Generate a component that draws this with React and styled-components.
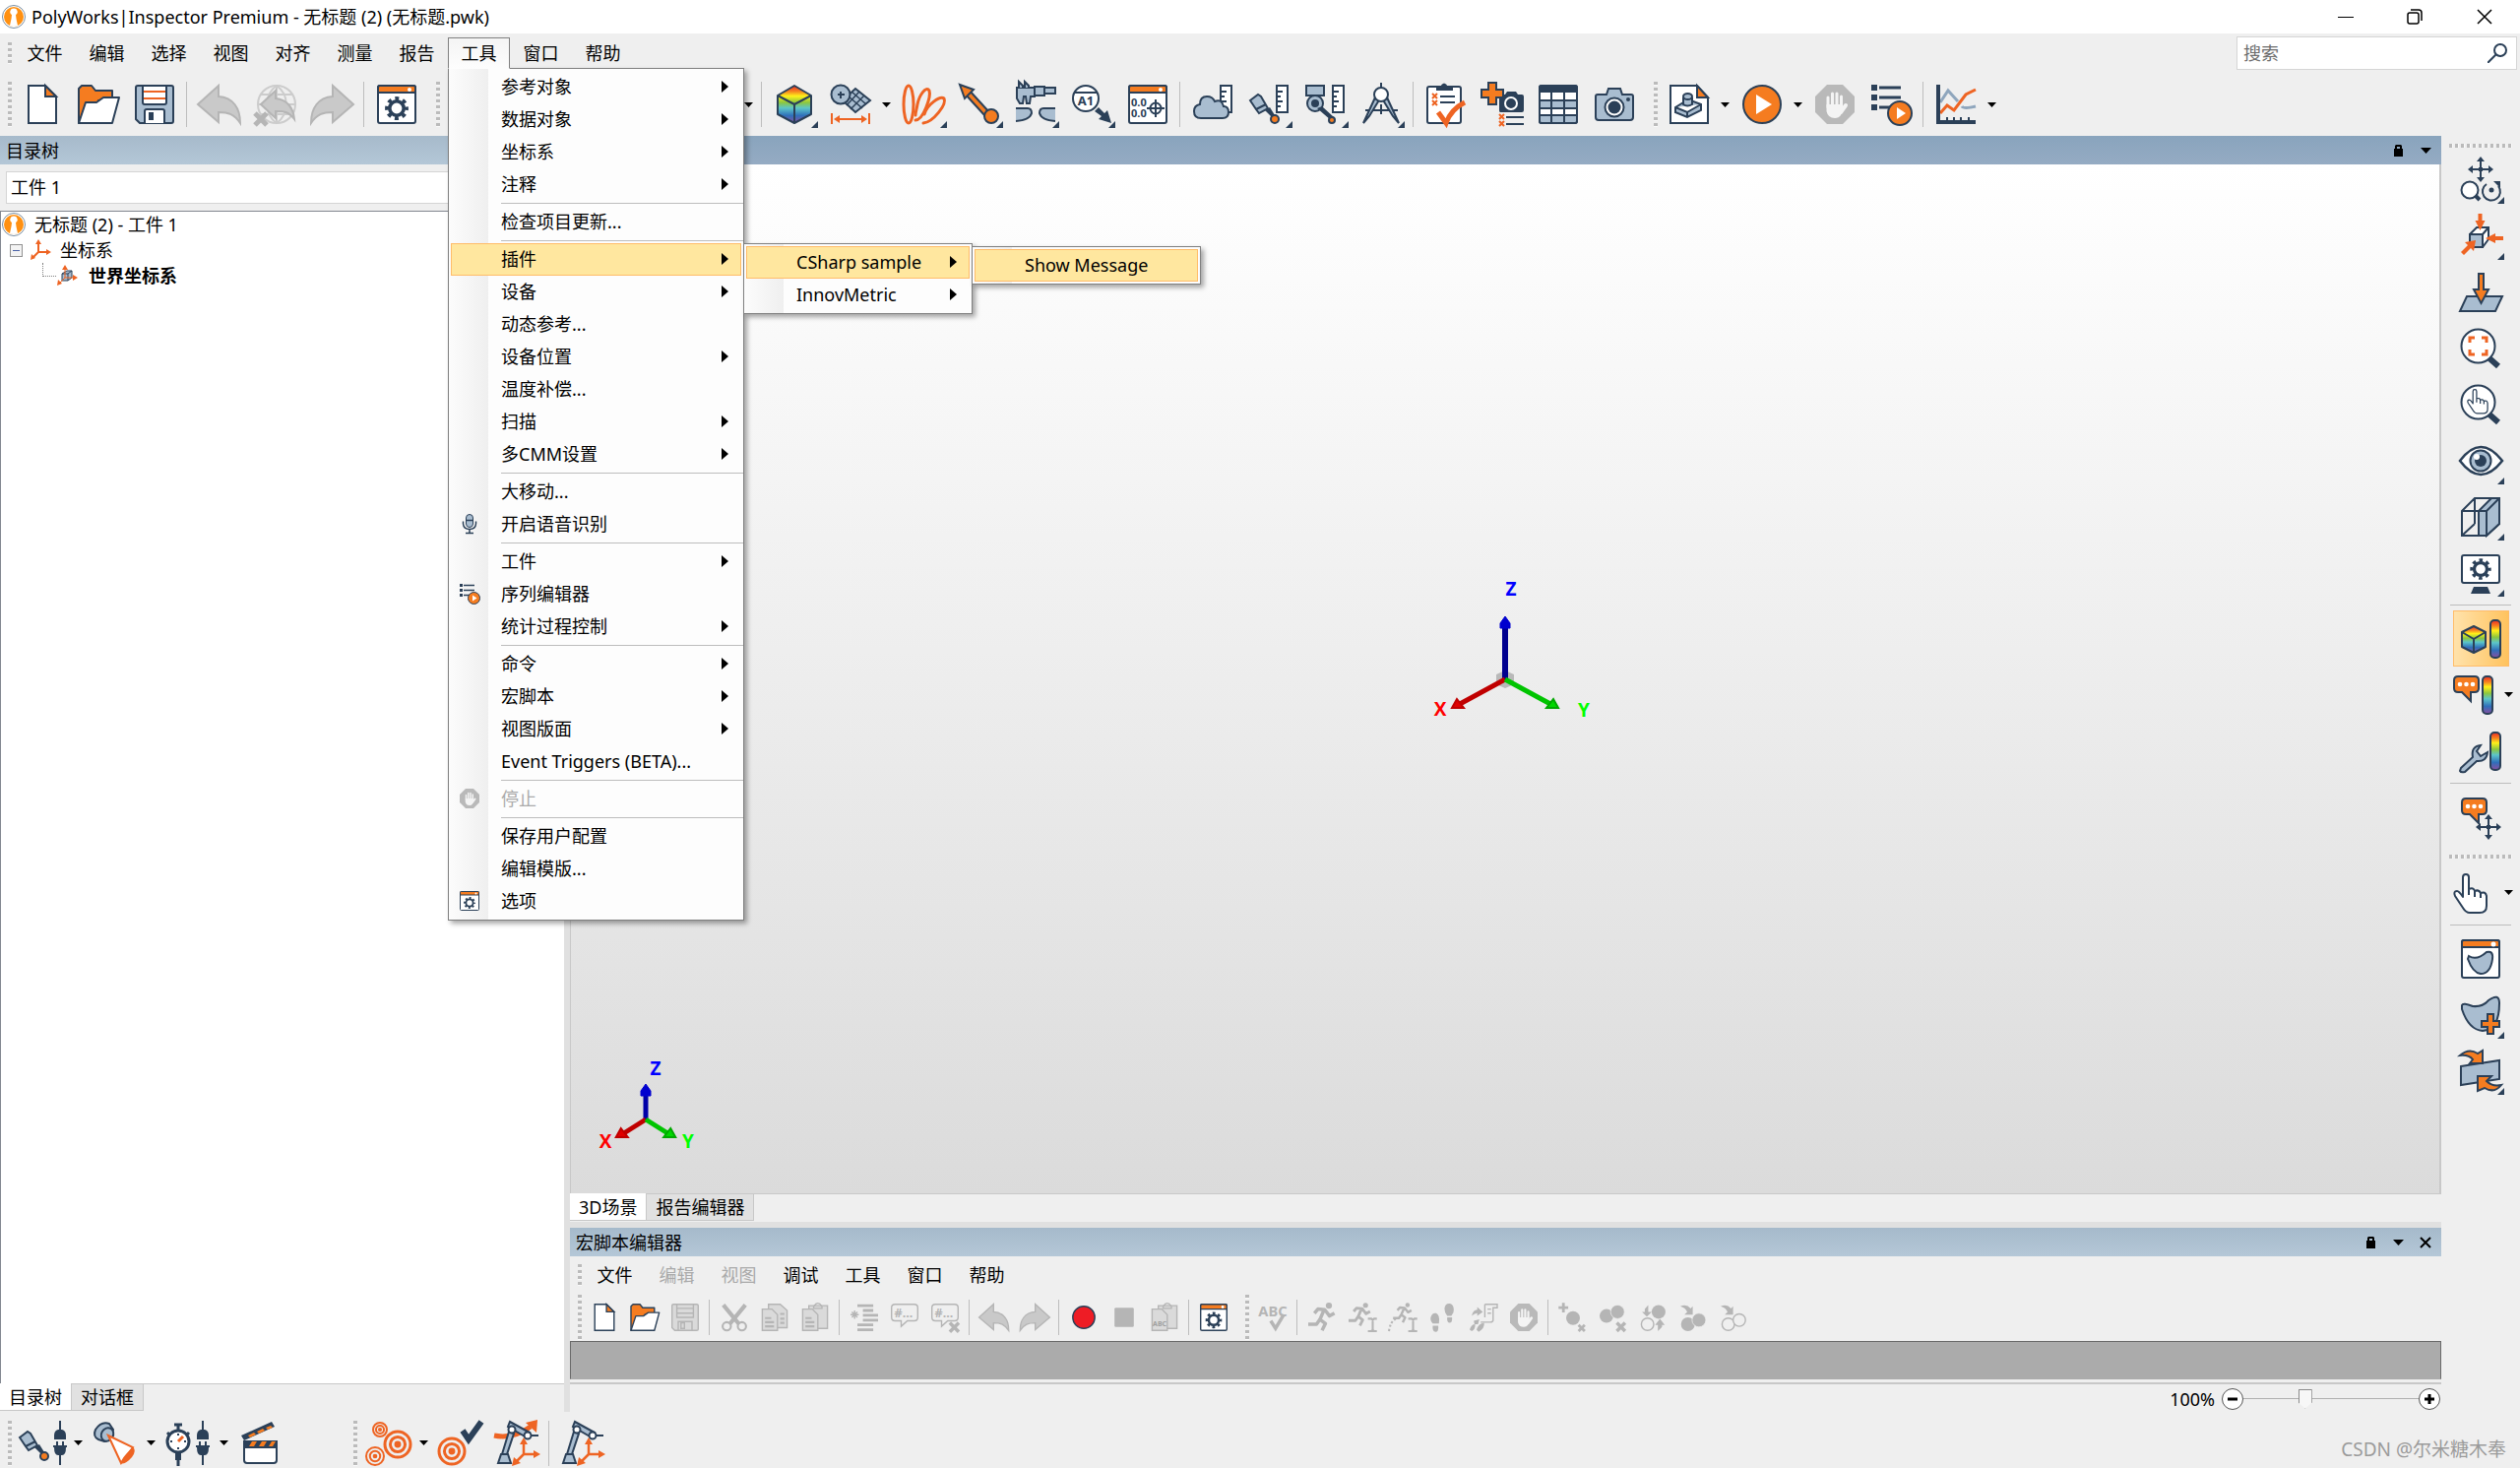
import React, { useState } from "react";
import styled, { createGlobalStyle, css } from "styled-components";

const NAVY = "#2b4058";
const STEEL = "#a9bdd0";
const ORANGE = "#f57c20";
const FLAME = "#ee6423";
const GREY = "#b5b5b5";
const PALE = "#dadada";

const line = { fill: "none", stroke: NAVY, strokeWidth: 2 };
const white = { fill: "#fff", stroke: NAVY, strokeWidth: 2 };
const steel = { fill: STEEL, stroke: NAVY, strokeWidth: 2 };
const orange = { fill: ORANGE, stroke: NAVY, strokeWidth: 2 };
const flame = { fill: "none", stroke: FLAME, strokeWidth: 2 };
const grey = { fill: "none", stroke: GREY, strokeWidth: 2 };
const pale = { fill: PALE, stroke: GREY, strokeWidth: 2 };

const GlobalStyle = createGlobalStyle`
  * {
    box-sizing: border-box;
  }
  body {
    margin: 0;
    background: #efefef;
    color: #000;
    font-family: "Noto Sans", "Noto Sans CJK SC", sans-serif;
    font-size: 18px;
    line-height: 24px;
  }
  button,
  input,
  select {
    font: inherit;
    color: inherit;
  }
`;

/* ---------- icon parts ---------- */

const Gear = ({ cx, cy, r, color = NAVY }) => (
  <g fill="none" stroke={color}>
    <circle cx={cx} cy={cy} r={r * 0.72} strokeWidth={r * 0.36} />
    <circle
      cx={cx}
      cy={cy}
      r={r}
      strokeWidth={r * 0.38}
      strokeDasharray={`${(r * Math.PI) / 8} ${(r * Math.PI) / 8}`}
      strokeDashoffset={(r * Math.PI) / 16}
    />
  </g>
);

const Target = ({ cx, cy, r }) => (
  <g fill="none" stroke={FLAME} strokeWidth={r > 9 ? 3 : 2}>
    <circle cx={cx} cy={cy} r={r} />
    <circle cx={cx} cy={cy} r={r * 0.58} />
    <circle cx={cx} cy={cy} r={r * 0.15} fill={FLAME} />
  </g>
);

const MoveArrows = ({ x, y }) => (
  <g transform={`translate(${x} ${y})`}>
    <path d="M-9 0H9M0-9V9" {...line} />
    <path
      d="M-13 0l5-4v8zM13 0l-5-4v8zM0-13l-4 5h8zM0 13l-4-5h8zM-2-2h4v4h-4z"
      fill={NAVY}
    />
  </g>
);

const Bubble = () => (
  <g>
    <path
      d="M5 1H22Q26 1 26 5V13Q26 17 22 17H18V26L9 17H5Q1 17 1 13V5Q1 1 5 1Z"
      {...orange}
    />
    <g fill="#fff">
      <circle cx="7" cy="9" r="2.3" />
      <circle cx="13.500" cy="9" r="2.3" />
      <circle cx="20" cy="9" r="2.3" />
    </g>
  </g>
);

const RainbowBar = ({ x }) => (
  <rect
    x={x}
    y="1"
    width="10"
    height="38"
    rx="4"
    fill="url(#rainbow)"
    stroke={NAVY}
    strokeWidth="2"
  />
);

const Ruler = () => (
  <path d="M28 1H39V28H28ZM28 7h6M28 12h4M28 17h6M28 22h4" {...white} />
);

const Plug = () => (
  <g>
    <path d="M40-3V8M40 29V42" {...line} />
    <path
      d="M34 16V12Q34 7 38 6H42Q46 7 46 12V16ZM33 22H36V18H38V22H42V18H44V22H47V24H46Q46 32 42 32H38Q34 32 34 24H33Z"
      fill={NAVY}
    />
  </g>
);

const ArmAxes = () => (
  <g transform="translate(-2 0)">
    <path d="M3 40L6 31H13L16 40ZM7 31L14 8L19 10L12 31Z" {...steel} />
    <path d="M15-2L35 9L32 14L13 3Z" {...steel} />
    <circle cx="17" cy="6" r="3.500" {...white} />
    <circle cx="33" cy="12" r="3.500" {...white} />
    <path d="M37 12H44" {...line} />
    <path d="M29 18V31H42M29 31L21 39" {...flame} strokeWidth="2.5" />
    <path d="M29 14l-4 7h8zM46 31l-7-4v8zM17 43l2-9 7 6z" fill={FLAME} />
  </g>
);

const Runner = () => (
  <g fill="none" stroke={GREY} strokeWidth="5">
    <circle cx="30" cy="3" r="4.500" fill={GREY} stroke="none" />
    <path
      d="M9 14L14 8L24 9L31 18L38 14M23 9L17 23L25 29L20 39M17 23L12 30H0"
      strokeLinejoin="round"
    />
  </g>
);

const TextCursor = () => (
  <path d="M28 22H33L35 24L37 22H41M28 40H33L35 38L37 40H41M35 23V39" {...grey} strokeWidth="3" />
);

const Hand = () => (
  <path
    d="M13 1Q16 1 16 4V16Q21 14 22 18Q26 16 28 20Q33 18 34 23V33Q34 40 27 40H17Q13 40 10 35L2 23Q0 18 4 18Q6 18 10 24V4Q10 1 13 1ZM16 16V22M22 18V24M28 20V25"
    strokeLinejoin="round"
    {...white}
  />
);

const StopHand = () => (
  <g>
    <path d="M12 0H28L40 12V28L28 40H12L0 28V12Z" fill="#b9b9b9" />
    <g stroke="#f4f4f4" strokeLinecap="round" fill="none">
      <path d="M13 23V13M17.500 20V9M22 20V9M26.500 21V12" strokeWidth="3" />
      <path d="M31 21L26 28" strokeWidth="4" />
    </g>
    <path d="M11.500 20H28V25L26 31Q24 34 20 34Q13 34 11.500 27Z" fill="#f4f4f4" />
  </g>
);

const Probe = () => (
  <g>
    <path d="M1 16L9 10L12 12L19 24L10 29L7 25Z" {...steel} />
    <path d="M7 25L17 20" {...line} />
    <path d="M16 26l5-3 5 8-3 2z" fill={NAVY} />
    <circle cx="26" cy="35" r="4" {...orange} />
  </g>
);

const icons = {
  newFile: (
    <g>
      <path d="M6 1H23L34 12V39H6Z" {...white} />
      <path d="M23 1V12H34Z" {...orange} />
    </g>
  ),
  open: (
    <g strokeLinejoin="round">
      <path d="M0 39V4L3 1H13L17 6H34V16H20V39Z" {...orange} />
      <path d="M0 39L7 18H18L25 13H41L34 39Z" {...white} />
    </g>
  ),
  save: (
    <g>
      <path d="M3 1H37Q39 1 39 3V37Q39 39 37 39H5L1 35V3Q1 1 3 1Z" {...steel} />
      <path d="M8 1H32V18Q32 20 30 20H10Q8 20 8 18Z" {...white} />
      <path d="M9 7H31M9 14H31" {...flame} />
      <path d="M10 39V27Q10 25 12 25H28Q30 25 30 27V39" {...white} />
      <path d="M14 28H19V36H14Z" fill={NAVY} />
    </g>
  ),
  saveOff: (
    <g>
      <path d="M3 1H37Q39 1 39 3V37Q39 39 37 39H5L1 35V3Q1 1 3 1Z" {...pale} />
      <path d="M8 1V20H32V1M9 7H31M9 14H31M10 39V26H30V39M14 28H19V36H14Z" {...grey} />
    </g>
  ),
  undo: <path d="M-2 20L19 1V12C34 13 41 24 41 39C35 30 29 28 19 28V38Z" {...pale} fill="#c9c9c9" />,
  redo: <path d="M42 20L21 1V12C6 13-1 24-1 39C5 30 11 28 21 28V38Z" {...pale} fill="#c9c9c9" />,
  undoWeb: (
    <g>
      <circle cx="21" cy="20" r="19" fill="none" stroke="#ccc" strokeWidth="2" />
      <path
        d="M21 1V39M2 20H40M5 10H37M5 30H37M21 1C8 10 8 30 21 39C34 30 34 10 21 1"
        fill="none"
        stroke="#ccc"
        strokeWidth="2"
      />
      <path d="M5 20L20 6V14C32 15 38 24 39 35C33 27 28 27 20 27V34Z" {...pale} fill="#c9c9c9" />
      <path d="M-1 29L11 41M11 29L-1 41" {...grey} strokeWidth="5" />
    </g>
  ),
  settings: (
    <g>
      <rect x="1" y="1" width="38" height="38" rx="2" {...white} />
      <path d="M1 8V3Q1 1 3 1H37Q39 1 39 3V8Z" {...orange} />
      <circle cx="33" cy="5" r="2" fill="#fff" />
      <Gear cx={20} cy={24} r={10} />
    </g>
  ),
  rainbowCube: (
    <g strokeLinejoin="round">
      <path d="M20 1L37 11V30L20 39L3 30V11Z" fill="url(#rainbow)" stroke={NAVY} strokeWidth="2" />
      <path d="M3 11L20 20L37 11M20 20V39" {...line} />
    </g>
  ),
  measure: (
    <g>
      <path d="M25 4L40 16L25 28L12 16Z" {...steel} />
      <path d="M21 7L36 20M17 11L32 24M29 7L16 21M34 11L20 25" {...line} strokeWidth="1.500" />
      <circle cx="10" cy="10" r="9.500" {...steel} />
      <path d="M10 7V14M7 10H14" {...line} />
      <path d="M1 29V40M39 29V40M5 35H35" {...flame} />
      <path d="M3 35l6-4v8zM37 35l-6-4v8z" fill={FLAME} />
    </g>
  ),
  curves: (
    <g {...flame} strokeWidth="3" strokeLinecap="round">
      <ellipse cx="5" cy="20" rx="5" ry="19" />
      <path d="M12 36C20 36 28 12 26 6C23 1 16 10 14 20C13 26 12 28 12 31" />
      <path d="M20 39C30 38 44 20 41 14C37 11 24 20 21 30" />
    </g>
  ),
  vector: (
    <g>
      <path d="M5 9L9 5L30 28L26 32Z" {...orange} />
      <path d="M0 0L14 5L5 14Z" {...orange} />
      <circle cx="32" cy="32" r="7" {...orange} />
    </g>
  ),
  caliper: (
    <g>
      <path d="M1 3H40V9H19V12H15L14 19H11L10 12H8L7 19H4L1 14Z" {...steel} />
      <path d="M3 3V-3L7 1V3M9 3V-3L13 1V3" {...steel} />
      <rect x="19" y="2" width="10" height="9" {...steel} />
      <path d="M0 24H12Q16 24 16 29Q14 36 0 37" {...steel} />
      <path d="M40 24H28Q24 24 24 29Q26 36 40 37" {...steel} />
    </g>
  ),
  datum: (
    <g>
      <circle cx="14" cy="14" r="13" {...white} />
      <path d="M3 8H25" {...line} />
      <text x="14" y="21" textAnchor="middle" fontSize="13" fontWeight="700" fill={NAVY}>
        A1
      </text>
      <path d="M23 27l4-4 6 6 3-3 4 13-13-4 3-3z" fill={NAVY} />
    </g>
  ),
  readout: (
    <g>
      <rect x="1" y="1" width="38" height="38" rx="2" {...white} />
      <path d="M1 8V3Q1 1 3 1H37Q39 1 39 3V8Z" {...orange} />
      <circle cx="33" cy="5" r="2" fill="#fff" />
      <g fontSize="11" fontWeight="700" fill={NAVY}>
        <text x="3" y="22">0.0</text>
        <text x="3" y="33">0.0</text>
      </g>
      <circle cx="28" cy="24" r="5.500" {...line} />
      <path d="M28 15V33M19 24H37" {...line} />
    </g>
  ),
  cloud: (
    <g>
      <Ruler />
      <path d="M8 34Q1 34 1 27Q1 21 7 20Q7 12 14 12Q20 12 22 17Q29 14 31 22Q36 22 36 28Q36 34 30 34Z" {...steel} />
    </g>
  ),
  probe: (
    <g>
      <Ruler />
      <Probe />
    </g>
  ),
  scanner: (
    <g>
      <Ruler />
      <path d="M1 1H19V11H1Z" {...steel} />
      <circle cx="10" cy="19" r="8" {...steel} />
      <circle cx="10" cy="19" r="4" fill={NAVY} />
      <path d="M12 24L17 22L29 33L26 36Z" fill={NAVY} />
      <circle cx="27" cy="36" r="3" {...orange} />
    </g>
  ),
  compass: (
    <g>
      <path d="M20-2V4M4 26H37" {...line} />
      <path d="M14 13L2 39L8 32L19 14ZM26 13L38 39L32 32L21 14Z" {...steel} />
      <circle cx="20" cy="10" r="7" {...white} />
      <path d="M20 20V30" {...line} />
    </g>
  ),
  checklist: (
    <g>
      <rect x="1" y="2" width="34" height="37" rx="2" {...white} />
      <path d="M10 2H14Q18-5 22 2H27V6H10Z" fill={NAVY} />
      <path d="M14 12H29M14 18H29" {...line} />
      <path d="M6 9l5 5m0-5l-5 5M6 16l5 5m0-5l-5 5" {...flame} />
      <path d="M12 28L20 39Q25 25 39 18" {...flame} strokeWidth="5" />
    </g>
  ),
  addSnapshot: (
    <g>
      <path d="M17 10H23L25 7H34L36 10H40Q42 10 42 12V26Q42 28 40 28H18Q17 28 17 26Z" fill={NAVY} />
      <circle cx="29" cy="19" r="6" fill={NAVY} stroke="#fff" strokeWidth="2" />
      <path d="M6-2H14V5H21V13H14V20H6V13H-1V5H6Z" {...orange} />
      <path d="M24 33H42M24 40H42" {...line} />
      <path d="M17 30l5 5m0-5l-5 5M17 37l5 5m0-5l-5 5" {...flame} />
    </g>
  ),
  table: (
    <g>
      <rect x="1" y="1" width="38" height="38" rx="2" {...white} />
      <path d="M1 16H39V24H1ZM1 31H39V39H1Z" fill={STEEL} />
      <path d="M1 16H39M1 24H39M1 31H39M13 8V39M26 8V39" {...line} />
      <rect x="1" y="1" width="38" height="38" rx="2" {...line} />
      <path d="M1 1H39V8H1Z" fill={NAVY} />
    </g>
  ),
  camera: (
    <g>
      <path d="M3 10H12L14 4H26L28 10H37Q39 10 39 12V33Q39 36 36 36H4Q1 36 1 33V12Q1 10 3 10Z" {...steel} />
      <circle cx="20" cy="23" r="9.500" {...white} />
      <circle cx="20" cy="23" r="6.500" fill={NAVY} />
      <circle cx="34" cy="15" r="2" fill={NAVY} />
    </g>
  ),
  partDoc: (
    <g>
      <path d="M1 1H28L39 13V39H1Z" {...white} />
      <path d="M28 1V13H39Z" {...orange} />
      <path d="M6 23L19 15L32 20V26L18 33L6 28ZM6 23L18 28L32 20M18 28V33" {...steel} />
      <path d="M14 13V20Q18 23 23 20V13" {...steel} />
      <ellipse cx="18.500" cy="12" rx="4.500" ry="3" {...steel} />
    </g>
  ),
  play: (
    <g>
      <circle cx="20" cy="20" r="19" {...orange} />
      <path d="M14 10V30L30 20Z" fill="#fff" />
    </g>
  ),
  stopHand: <StopHand />,
  sequence: (
    <g>
      <path d="M0 0H6V6H0ZM0 10H6V16H0ZM0 20H6V26H0Z" fill={NAVY} />
      <path d="M8 3H30M8 13H30M8 23H22" {...line} strokeWidth="3" />
      <circle cx="29" cy="29" r="12" {...orange} />
      <path d="M26 23V35L35 29Z" fill="#fff" />
    </g>
  ),
  chart: (
    <g>
      <path d="M4 18L12 6L22 17M26 22Q28 25 40 22" fill="none" stroke="#8fa6bd" strokeWidth="3" />
      <path d="M4 29L11 21L18 26L30 10L40 5" {...flame} strokeWidth="3" />
      <path d="M2 0V38H40" {...line} strokeWidth="4" />
      <path d="M11 33V37M18 33V37M25 33V37M33 33V37" {...line} />
    </g>
  ),
  navigate: (
    <g>
      <MoveArrows x={20} y={9} />
      <path d="M13 34L19 40" {...line} strokeWidth="4" />
      <circle cx="9" cy="30" r="8.500" {...white} />
      <path d="M26 24A9 9 0 1 0 38 26" {...line} />
      <path d="M33 21h7v7z" fill={NAVY} />
      <circle cx="31" cy="30" r="2.500" fill={NAVY} />
    </g>
  ),
  standardView: (
    <g>
      <path d="M9 18L16 11H28V23L22 31H9Z" {...white} />
      <path d="M9 18H22V31H9Z" {...steel} />
      <path d="M22 18L28 11" {...line} />
      <path d="M17.500-3h4v7h3l-5 10-5-10h3zM43 20v4h-8v3l-10-5 10-5v3zM0 36l7-7-3-3 11-2-2 11-3-3-7 7z" fill={FLAME} />
    </g>
  ),
  alignPlane: (
    <g>
      <path d="M6 24H42L35 39H-1Z" {...steel} />
      <path d="M18 1H23V17H28L20.500 31L13 17H18Z" {...orange} />
    </g>
  ),
  zoomFit: (
    <g>
      <path d="M29 30L38 38" {...line} strokeWidth="6" />
      <circle cx="17.500" cy="17.500" r="17" {...white} />
      <path d="M9 14V9H14M21 9H26V14M26 21V26H21M14 26H9V21" {...flame} strokeWidth="3" />
    </g>
  ),
  zoomHand: (
    <g>
      <path d="M29 30L38 38" {...line} strokeWidth="6" />
      <circle cx="17.500" cy="17.500" r="17" {...white} />
      <g transform="translate(6 4) scale(.62)">
        <Hand />
      </g>
    </g>
  ),
  eye: (
    <g>
      <path d="M-1 20Q20-8 42 20Q20 48-1 20Z" {...white} strokeWidth="2.500" />
      <circle cx="20" cy="20" r="10.500" {...steel} />
      <circle cx="20" cy="20" r="6" fill={NAVY} />
      <circle cx="16" cy="16" r="3" fill="#fff" />
    </g>
  ),
  section: (
    <g>
      <path d="M1 14L14 1H39V27L26 39H1ZM14 1V27M14 27L1 39" {...line} />
      <path d="M18 14H26V39H18ZM18 14L31 1H39V27L26 39V14Z" {...steel} />
      <path d="M26 14L39 1M1 14H26" {...line} />
    </g>
  ),
  display: (
    <g>
      <rect x="1" y="2" width="38" height="28" rx="2" {...white} />
      <Gear cx={20} cy={16} r={9} />
      <path d="M13 34H27L30 41H10Z" fill={NAVY} />
    </g>
  ),
  cubeScale: (
    <g strokeLinejoin="round">
      <path d="M13 7L25 13V28L13 34L1 28V13Z" fill="url(#rainbow)" stroke={NAVY} strokeWidth="2" />
      <path d="M1 13L13 20L25 13M13 20V34" {...line} />
      <RainbowBar x={30} />
    </g>
  ),
  bubbleScale: (
    <g>
      <Bubble />
      <RainbowBar x={30} />
    </g>
  ),
  wrenchScale: (
    <g>
      <path
        d="M0 37L12 26Q10 15 20 14L16 20L20 25L27 21Q26 31 16 30L4 41Q0 42-1 40Z"
        {...steel}
      />
      <RainbowBar x={30} />
    </g>
  ),
  bubbleMove: (
    <g>
      <Bubble />
      <MoveArrows x={28} y={30} />
    </g>
  ),
  hand: <Hand />,
  surfaceWindow: (
    <g>
      <rect x="1" y="1" width="38" height="38" rx="2" {...white} />
      <path d="M1 8V3Q1 1 3 1H37Q39 1 39 3V8Z" {...orange} />
      <circle cx="33" cy="5" r="2.500" fill="#fff" />
      <path d="M8 17Q16 22 26 13Q33 11 32 20Q30 35 20 35Q12 34 7 20Z" {...steel} />
    </g>
  ),
  surfaceAdd: (
    <g>
      <path d="M1 10Q2 7 12 11Q22 12 28 5Q39-3 39 8Q39 35 22 36Q8 35 1 14Z" {...steel} />
      <path d="M27 19H33V26H39V32H33V39H27V32H21V26H27Z" {...orange} />
    </g>
  ),
  surfaceSwap: (
    <g>
      <path d="M0 15L39 9V28L0 34Z" {...steel} />
      <path d="M-1 4Q8-4 17 2L22-1V12H9L12 8Q8 3-1 4Z" {...orange} />
      <path d="M41 34Q34 43 24 37L17 40V25H31L26 30Q32 36 41 34Z" {...orange} />
    </g>
  ),
  record: <circle cx="20" cy="20" r="16" fill="#ee1c25" stroke={NAVY} strokeWidth="2" />,
  stop: <rect x="6" y="6" width="28" height="28" rx="2" fill={GREY} />,
  cut: (
    <g {...grey} strokeWidth="3">
      <path d="M4 2L27 30M36 2L13 30" strokeWidth="6" />
      <circle cx="9" cy="33" r="6" />
      <circle cx="31" cy="33" r="6" />
    </g>
  ),
  copy: (
    <g>
      <path d="M11 1H28L38 10V35H11Z" {...pale} />
      <path d="M2 8H16L24 16V39H2Z" {...pale} />
      <path d="M6 21H15M6 27H19M6 33H19M28 15H34M28 22H34M28 28H34" {...grey} strokeWidth="3" />
    </g>
  ),
  paste: (
    <g>
      <path d="M11 3H38V36H11Z" {...pale} />
      <path d="M18 4Q24-5 30 4V7H18Z" {...grey} />
      <path d="M2 8H16L24 16V39H2Z" {...pale} />
      <path d="M6 21H15M6 27H19M6 33H19" {...grey} strokeWidth="3" />
    </g>
  ),
  pasteText: (
    <g>
      <path d="M11 3H38V36H11Z" {...pale} />
      <path d="M18 4Q24-5 30 4V7H18Z" {...grey} />
      <path d="M2 8H16L24 16V39H2Z" {...pale} />
      <text x="3" y="33" fontSize="10" fontWeight="700" fill="#9f9f9f">ABC</text>
    </g>
  ),
  indent: (
    <g>
      <path d="M10 3H33M18 10H33M18 17H40M18 24H40M10 31H33M10 38H33" {...grey} strokeWidth="4" />
      <path d="M6 10V22M0 16H12M2 12L10 20M10 12L2 20" {...grey} />
    </g>
  ),
  comment: (
    <g>
      <path d="M6 1H34Q39 1 39 6V20Q39 25 34 25H24L15 33V25H6Q1 25 1 20V6Q1 1 6 1Z" {...grey} />
      <text x="5" y="20" fontSize="18" fontWeight="700" fill={GREY}>#...</text>
    </g>
  ),
  uncomment: (
    <g>
      <path d="M6 1H34Q39 1 39 6V20Q39 25 34 25H24L15 33V25H6Q1 25 1 20V6Q1 1 6 1Z" {...grey} />
      <text x="5" y="20" fontSize="18" fontWeight="700" fill={GREY}>#...</text>
      <path d="M27 28L40 41M40 28L27 41" {...grey} strokeWidth="5" />
    </g>
  ),
  spelling: (
    <g>
      <text x="-1" y="18" fontSize="21" fontWeight="700" fill={GREY}>ABC</text>
      <path d="M17 25L24 36L36 16" {...grey} strokeWidth="5" />
    </g>
  ),
  run: <Runner />,
  runToCursor: (
    <g>
      <g transform="scale(.82)">
        <Runner />
      </g>
      <TextCursor />
    </g>
  ),
  skipToCursor: (
    <g>
      <g transform="translate(6 0) scale(.7)">
        <Runner />
      </g>
      <path d="M0 40Q2 26 10 22" {...grey} strokeWidth="3" strokeDasharray="3 3" />
      <TextCursor />
    </g>
  ),
  steps: (
    <g fill={GREY}>
      <path d="M2 20Q4 13 10 14Q16 17 14 29H5Q1 25 2 20ZM5 32H13Q14 41 9 41Q4 40 5 32ZM22 7Q23-1 30 0Q37 2 35 13L32 18H26Q22 13 22 7ZM26 20L33 20Q34 28 29 28Q25 27 26 20Z" />
    </g>
  ),
  stepInto: (
    <g>
      <path d="M22 1H40V6H34V24Q34 27 30 27H16M22 1V20M26 8H31M26 14H31" {...grey} />
      <path d="M3 18Q5 9 11 9V5L19 12L11 18V14Q7 14 3 18ZM0 38Q2 30 8 30Q8 38 3 40ZM10 38Q13 29 21 28Q22 36 13 41ZM6 25L14 23L12 30H7Z" fill={GREY} />
    </g>
  ),
  addBreak: (
    <g>
      <path d="M6-1V13M-1 6H13M28 31L37 40M37 31L28 40" {...grey} strokeWidth="4" />
      <circle cx="20" cy="21" r="10" fill={GREY} />
    </g>
  ),
  clearBreaks: (
    <g>
      <circle cx="10" cy="18" r="10" fill={GREY} />
      <circle cx="26" cy="12" r="10" fill={GREY} stroke="#efefef" />
      <path d="M25 28L37 40M37 28L25 40" {...grey} strokeWidth="5" />
    </g>
  ),
  swapBreaks: (
    <g>
      <circle cx="27" cy="12" r="10" fill={GREY} />
      <circle cx="11" cy="30" r="9" {...grey} />
      <path d="M12 2L7 8V12H3L10 19L17 12H12ZM26 40L32 34V31H36L29 22L22 31H26Z" fill={GREY} />
    </g>
  ),
  enableBreaks: (
    <g>
      <circle cx="11" cy="30" r="10" fill={GREY} />
      <circle cx="27" cy="24" r="10" fill={GREY} stroke="#efefef" />
      <path d="M0 4Q9 0 15 7L18 4V16H6L10 12Q7 6 0 4Z" fill={GREY} />
    </g>
  ),
  disableBreaks: (
    <g>
      <circle cx="11" cy="30" r="9" {...grey} />
      <circle cx="27" cy="24" r="9" fill="#efefef" stroke={GREY} strokeWidth="2" />
      <path d="M0 4Q9 0 15 7L18 4V16H6L10 12Q7 6 0 4Z" fill={GREY} />
    </g>
  ),
  mic: (
    <g>
      <rect x="13" y="1" width="14" height="26" rx="7" {...steel} />
      <path d="M7 15V20Q8 31 20 31Q32 31 33 20V15M20 31V38M12 39H28M14 13H26" {...line} strokeWidth="3" />
    </g>
  ),
  probePlug: (
    <g>
      <g transform="translate(-4 -2)">
        <Probe />
      </g>
      <g transform="translate(-2 0)">
        <Plug />
      </g>
    </g>
  ),
  laser: (
    <g>
      <path d="M0 6Q6-3 14 0L18 6Q16 17 9 18L3 16Q-3 13 0 6Z" {...steel} />
      <ellipse cx="12" cy="11" rx="6" ry="7" transform="rotate(30 12 11)" {...steel} />
      <path d="M13 12L38 24L26 40Z" {...white} stroke={FLAME} />
      <path d="M38 24Q42 27 37 34Q30 42 26 40Q25 36 38 24Z" fill={FLAME} />
    </g>
  ),
  timerPlug: (
    <g>
      <circle cx="10" cy="18" r="11" {...white} strokeWidth="3" />
      <path d="M6 1H14M10 1V7M10 29V43M-1 9L2 12M21 9L18 12" {...line} strokeWidth="3" />
      <path d="M10 30V37" {...line} strokeWidth="6" />
      <path d="M10 18L15 13" {...flame} strokeWidth="3" />
      <path d="M10 10V12M10 24V26M2 18H4M16 18H18" {...line} />
      <g transform="translate(-5 0)">
        <Plug />
      </g>
    </g>
  ),
  clapper: (
    <g transform="translate(-1 0)">
      <path d="M4 24H37V37Q37 40 34 40H7Q4 40 4 37Z" {...white} />
      <path d="M3 17H38V24H3ZM1 12L32-2L35 3L4 17Z" fill={NAVY} />
      <path d="M9 23l3-5h5l-3 5zM19 23l3-5h5l-3 5zM29 23l3-5h4l-3 5zM8 12l6-3 2 2-6 3zM17 8l6-3 2 2-6 3zM26 4l5-2 2 2-5 2z" fill={ORANGE} />
    </g>
  ),
  targets: (
    <g>
      <Target cx={12} cy={6} r={7} />
      <Target cx={30} cy={21} r={13} />
      <Target cx={7} cy={33} r={9} />
    </g>
  ),
  targetCheck: (
    <g>
      <Target cx={11} cy={28} r={13} />
      <path d="M22 7L28 16L41-2" {...line} strokeWidth="6" />
    </g>
  ),
  armPath: (
    <g>
      <path d="M-3 12Q16 16 34 3" {...flame} strokeWidth="5" />
      <path d="M41-4L40 9L29-1Z" fill={FLAME} />
      <ArmAxes />
    </g>
  ),
  armAxes: <ArmAxes />,
};

const Icon = ({ name, size = 40, corner }) => (
  <Glyph width={size} height={size} viewBox="0 0 40 40" aria-hidden="true">
    {icons[name]}
    {corner && <path d="M44 37V44H37Z" fill={NAVY} />}
  </Glyph>
);

const Logo = () => (
  <Glyph width="24" height="24" viewBox="0 0 24 24" aria-hidden="true">
    <circle cx="12" cy="12" r="11.500" fill="#fff" stroke="#7a8fa3" />
    <circle cx="12" cy="12" r="10" fill="#ff9011" />
    <path
      d="M12 3.500A3.500 3.500 0 0 1 14 10L14.500 14L16 21Q12 23 8 21L9.500 14L10 10A3.500 3.500 0 0 1 12 3.500Z"
      fill="#fff"
    />
  </Glyph>
);

const Axes3D = ({ small }) => {
  const k = small ? 0.56 : 1;
  const dx = 54 * k;
  const dy = small ? 18 : 29;
  const top = small ? 36 : 64;
  const z = small ? "#0000a8" : "#00008f";
  return (
    <Glyph
      width={small ? 100 : 160}
      height={small ? 110 : 220}
      viewBox={small ? "-50 -74 100 110" : "-80 -110 160 220"}
      role="img"
      aria-label="XYZ"
    >
      {!small && <path d="M-9-5L0-9L9-5V5L0 9L-9 5Z" fill="#b9b9b9" />}
      <path d={`M0 0V${-top + 10}`} stroke={z} strokeWidth={small ? 5 : 6} />
      <path d={`M0 0L${-dx + 8} ${dy - 4}`} stroke="#c00000" strokeWidth="5" />
      <path d={`M0 0L${dx - 8} ${dy - 4}`} stroke="#00c400" strokeWidth="5" />
      <path d={`M0 ${-top}L5 ${-top + 7}V${-top + 12}H-5V${-top + 7}Z`} fill="#0000cf" stroke="#0000cf" />
      <path d={`M${-dx} ${dy}l5-9l7 9z`} fill="#e00000" stroke="#c00000" strokeWidth="2" />
      <path d={`M${dx} ${dy}l-5-9l-7 9z`} fill="#00d800" stroke="#00a800" strokeWidth="2" />
      <AxisText x={small ? 10 : 6} y={small ? -45 : -85} fill="#00f">Z</AxisText>
      <AxisText x={small ? -41 : -66} y={small ? 29 : 37} fill="#f00">X</AxisText>
      <AxisText x={small ? 43 : 80} y={small ? 29 : 38} fill="#0f0">Y</AxisText>
    </Glyph>
  );
};

const FrameIcon = ({ boxed }) => (
  <Glyph width="22" height="22" viewBox="0 0 22 22" aria-hidden="true">
    {boxed && <path d="M6 9L11 6H16V13L12 16H6ZM6 9H12V16M12 9L16 6" fill={STEEL} stroke={NAVY} />}
    <path d="M9 3V13H18M9 13L3 19" {...flame} strokeWidth={boxed ? 1 : 2} />
    <path d="M9 0l-3 5h6zM22 13l-5-3v6zM1 21l1-6 4 4z" fill={FLAME} />
  </Glyph>
);

/* ---------- data ---------- */

const mainMenu = ["文件", "编辑", "选择", "视图", "对齐", "测量", "报告", "工具", "窗口", "帮助"];

const toolsMenu = [
  { label: "参考对象", sub: true },
  { label: "数据对象", sub: true },
  { label: "坐标系", sub: true },
  { label: "注释", sub: true },
  null,
  { label: "检查项目更新..." },
  null,
  {
    label: "插件",
    items: [
      { label: "CSharp sample", items: [{ label: "Show Message", active: true }] },
      { label: "InnovMetric", sub: true },
    ],
  },
  { label: "设备", sub: true },
  { label: "动态参考..." },
  { label: "设备位置", sub: true },
  { label: "温度补偿..." },
  { label: "扫描", sub: true },
  { label: "多CMM设置", sub: true },
  null,
  { label: "大移动..." },
  { label: "开启语音识别", icon: "mic" },
  null,
  { label: "工件", sub: true },
  { label: "序列编辑器", icon: "sequence" },
  { label: "统计过程控制", sub: true },
  null,
  { label: "命令", sub: true },
  { label: "宏脚本", sub: true },
  { label: "视图版面", sub: true },
  { label: "Event Triggers (BETA)..." },
  null,
  { label: "停止", icon: "stopHand", disabled: true },
  null,
  { label: "保存用户配置" },
  { label: "编辑模版..." },
  { label: "选项", icon: "settings" },
];

// "|" is a separator, ":" a grip, "v" a drop-down arrow, a trailing "*" a corner mark,
// "!" the pressed tool and "+" a tool with its own arrow
const topTools =
  ": newFile open save | undo undoWeb redo | settings : rainbowCube partDoc table camera v partDoc v | rainbowCube* measure v curves* vector* caliper* datum* readout | cloud probe* scanner* compass* | checklist addSnapshot table camera : partDoc v play v stopHand sequence | chart v";
const sideTools =
  ": navigate* standardView* alignPlane zoomFit zoomHand eye* section* display* | cubeScale! bubbleScale+ wrenchScale | bubbleMove : hand+ | surfaceWindow surfaceAdd* surfaceSwap*";
const macroTools =
  ": newFile open saveOff | cut copy paste | indent comment uncomment | undo redo | record stop pasteText | settings : spelling | run runToCursor skipToCursor steps stepInto stopHand | addBreak clearBreaks swapBreaks enableBreaks disableBreaks";
const deviceTools = ": probePlug v laser v timerPlug v clapper";
const alignTools = ": targets v targetCheck armPath | armAxes";

const macroMenu = [
  { label: "文件" },
  { label: "编辑", disabled: true },
  { label: "视图", disabled: true },
  { label: "调试" },
  { label: "工具" },
  { label: "窗口" },
  { label: "帮助" },
];

/* ---------- components ---------- */

const DropArrow = () => (
  <DropButton type="button" aria-label="more">
    <svg width="9" height="5" viewBox="0 0 9 5">
      <path d="M0 0H9L4.500 5Z" />
    </svg>
  </DropButton>
);

function Tools({ spec, size, cell, vertical }) {
  return spec.split(" ").map((part, i) => {
    if (part === "|") return <Divider key={i} $vertical={vertical} />;
    if (part === ":") return <Grip key={i} $vertical={vertical} $first={i === 0} />;
    if (part === "v") return <DropArrow key={i} />;
    const name = part.replace(/[*+!]/, "");
    const button = (
      <ToolButton type="button" key={i} aria-label={name} $cell={cell} $active={part.endsWith("!")}>
        <Icon name={name} size={size} corner={part.endsWith("*")} />
      </ToolButton>
    );
    if (!part.endsWith("+")) return button;
    return (
      <SplitTool key={i}>
        {button}
        <DropArrow />
      </SplitTool>
    );
  });
}

function Menu({ items, nested }) {
  return (
    <MenuBox $nested={nested} role="menu">
      {items.map((item, i) =>
        item ? (
          <MenuItem key={i} role="none">
            <MenuButton type="button" role="menuitem" disabled={item.disabled} $active={item.active || !!item.items}>
              <MenuIcon>{item.icon && <Icon name={item.icon} size={20} />}</MenuIcon>
              {item.label}
              {(item.sub || item.items) && (
                <SubArrow width="7" height="12" viewBox="0 0 7 12">
                  <path d="M0 0L7 6L0 12Z" />
                </SubArrow>
              )}
            </MenuButton>
            {item.items && <Menu items={item.items} nested />}
          </MenuItem>
        ) : (
          <MenuRule key={i} role="separator" />
        )
      )}
    </MenuBox>
  );
}

const PanelControls = ({ closable }) => (
  <ControlGroup>
    <BarButton type="button" aria-label="lock">
      <svg width="9" height="12" viewBox="0 0 9 12">
        <path d="M0 4H9V12H0ZM1 4V1L2 0H7L8 1V4H6V2H3V4Z" />
      </svg>
    </BarButton>
    <BarButton type="button" aria-label="options">
      <svg width="11" height="6" viewBox="0 0 11 6">
        <path d="M0 0H11L5.500 6Z" />
      </svg>
    </BarButton>
    {closable && (
      <BarButton type="button" aria-label="close">
        <svg width="12" height="12" viewBox="0 0 12 12">
          <path d="M1 1L11 11M11 1L1 11" stroke="#000" strokeWidth="2" />
        </svg>
      </BarButton>
    )}
  </ControlGroup>
);

function App() {
  const [zoom, setZoom] = useState(34);
  const [search, setSearch] = useState("");

  return (
    <Window>
      <GlobalStyle />
      <Defs width="0" height="0" aria-hidden="true">
        <linearGradient id="rainbow" x1="0" y1="0" x2="0" y2="1">
          <stop offset="0" stopColor="#ee2a24" />
          <stop offset=".15" stopColor="#f58220" />
          <stop offset=".28" stopColor="#fff11a" />
          <stop offset=".45" stopColor="#8cc63e" />
          <stop offset=".6" stopColor="#5cc5c9" />
          <stop offset=".8" stopColor="#2f6fba" />
          <stop offset="1" stopColor="#8b4fa0" />
        </linearGradient>
      </Defs>

      <TitleBar>
        <Logo />
        <Title>PolyWorks|Inspector Premium - 无标题 (2) (无标题.pwk)</Title>
        <WindowButton type="button" aria-label="minimize">
          <svg width="16" height="16" viewBox="0 0 16 16">
            <path d="M0 8.500H16" stroke="#000" />
          </svg>
        </WindowButton>
        <WindowButton type="button" aria-label="restore">
          <svg width="16" height="16" viewBox="0 0 16 16" fill="none" stroke="#000" strokeWidth="1.500">
            <rect x="1" y="4" width="11" height="11" rx="2" />
            <path d="M4 1H12Q15 1 15 4V12" />
          </svg>
        </WindowButton>
        <WindowButton type="button" aria-label="close">
          <svg width="16" height="16" viewBox="0 0 16 16">
            <path d="M1 1L15 15M15 1L1 15" stroke="#000" strokeWidth="1.500" />
          </svg>
        </WindowButton>
      </TitleBar>

      <MenuBar>
        <Grip $first $short />
        {mainMenu.map((label) => (
          <MenuSlot key={label}>
            <MenuTitle type="button" $open={label === "工具"}>
              {label}
            </MenuTitle>
            {label === "工具" && <Menu items={toolsMenu} />}
          </MenuSlot>
        ))}
        <SearchBox>
          <SearchInput
            aria-label="搜索"
            placeholder="搜索"
            value={search}
            onChange={(e) => setSearch(e.target.value)}
          />
          <svg width="20" height="20" viewBox="0 0 20 20" {...line}>
            <circle cx="13" cy="7" r="6" />
            <path d="M9 11L0 20" />
          </svg>
        </SearchBox>
      </MenuBar>

      <ToolBar>
        <Tools spec={topTools} size={40} cell={57} />
      </ToolBar>

      <Workspace>
        <TreeDock>
          <PanelBar>目录树</PanelBar>
          <PartPicker>
            <PartSelect aria-label="工件">
              <option>工件 1</option>
            </PartSelect>
          </PartPicker>
          <Tree>
            <TreeRow $indent={1} $gap={9}>
              <Logo />
              无标题 (2) - 工件 1
            </TreeRow>
            <TreeRow $indent={9} $gap={7}>
              <Expander type="button" aria-label="collapse" />
              <FrameIcon />
              <span>坐标系</span>
            </TreeRow>
            <TreeRow $indent={42} $gap={0} $bold>
              <Branch />
              <FrameIcon boxed />
              <span>世界坐标系</span>
            </TreeRow>
          </Tree>
          <TabStrip>
            <Tab type="button" $active>
              目录树
            </Tab>
            <Tab type="button">对话框</Tab>
          </TabStrip>
        </TreeDock>

        <MainDock>
          <PanelBar $focused>
            <PanelControls />
          </PanelBar>
          <Scene>
            <Axes3D />
            <CornerAxes>
              <Axes3D small />
            </CornerAxes>
          </Scene>
          <TabStrip>
            <Tab type="button" $active>
              3D场景
            </Tab>
            <Tab type="button">报告编辑器</Tab>
          </TabStrip>
          <Splitter />
          <PanelBar>
            宏脚本编辑器
            <PanelControls closable />
          </PanelBar>
          <MacroMenuBar>
            <Grip $first $short />
            {macroMenu.map((m) => (
              <MenuTitle type="button" key={m.label} disabled={m.disabled}>
                {m.label}
              </MenuTitle>
            ))}
          </MacroMenuBar>
          <MacroToolBar>
            <Tools spec={macroTools} size={28} cell={41} />
          </MacroToolBar>
          <ScriptArea />
          <ZoomRow>
            <label htmlFor="zoom">100%</label>
            <RoundButton type="button" aria-label="zoom out">
              <svg width="10" height="10" viewBox="0 0 10 10">
                <path d="M0 5H10" stroke="#000" strokeWidth="3" />
              </svg>
            </RoundButton>
            <ZoomSlider id="zoom" type="range" value={zoom} onChange={(e) => setZoom(e.target.value)} />
            <RoundButton type="button" aria-label="zoom in">
              <svg width="10" height="10" viewBox="0 0 10 10">
                <path d="M0 5H10M5 0V10" stroke="#000" strokeWidth="3" />
              </svg>
            </RoundButton>
          </ZoomRow>
        </MainDock>

        <SideBar>
          <Tools spec={sideTools} size={40} cell={57} vertical />
        </SideBar>
      </Workspace>

      <BottomBar>
        <BottomGroup>
          <Tools spec={deviceTools} size={40} cell={57} />
        </BottomGroup>
        <BottomGroup>
          <Tools spec={alignTools} size={40} cell={57} />
        </BottomGroup>
        <Watermark>CSDN @尔米糖木奉</Watermark>
      </BottomBar>
    </Window>
  );
}

export default App;

/* ---------- styles ---------- */

const Glyph = styled.svg`
  display: block;
  flex: none;
  overflow: visible;
`;

const Defs = styled.svg`
  position: absolute;
`;

const AxisText = styled.text`
  font: bold 19px "Open Sans", sans-serif;
  text-anchor: middle;
`;

const Window = styled.div`
  display: flex;
  flex-direction: column;
  min-height: 100vh;
`;

const plainButton = css`
  display: flex;
  align-items: center;
  justify-content: center;
  padding: 0;
  border: 0;
  background: none;
`;

const TitleBar = styled.header`
  display: flex;
  align-items: center;
  height: 34px;
  padding-left: 2px;
  background: #fff;
`;

const Title = styled.h1`
  flex: 1;
  margin: 0 0 0 6px;
  font-size: 18px;
  font-weight: 400;
  line-height: 24px;
`;

const WindowButton = styled.button`
  ${plainButton}
  width: 70px;
  height: 34px;

  &:last-child {
    width: 72px;
  }
`;

const MenuBar = styled.nav`
  display: flex;
  align-items: center;
  height: 38px;
  padding: 2px 3px 0 0;
`;

const MenuSlot = styled.div`
  position: relative;
`;

const MenuTitle = styled.button`
  ${plainButton}
  position: relative;
  width: 63px;
  height: 32px;
  border: 1px solid transparent;

  &:disabled {
    color: #aaa;
  }
  ${(props) =>
    props.$open &&
    css`
      z-index: 3;
      background: linear-gradient(#f4f4f4, #fdfdfd);
      border-color: #808080;
      border-bottom-color: #fdfdfd;
    `}
`;

const MenuBox = styled.ul`
  position: absolute;
  z-index: 2;
  top: ${(props) => (props.$nested ? "0" : "31px")};
  left: ${(props) => (props.$nested ? "calc(100% + 2px)" : "0")};
  width: ${(props) => (props.$nested ? 233 : 301)}px;
  margin: 0;
  padding: 2px;
  list-style: none;
  border: 1px solid #808080;
  background: linear-gradient(90deg, #fcfcfc, #efefef 40px, #fdfdfd 40px);
  box-shadow: 3px 3px 5px rgba(0, 0, 0, 0.35);
`;

const MenuItem = styled.li`
  position: relative;
`;

const MenuButton = styled.button`
  display: flex;
  align-items: center;
  width: 100%;
  height: 33px;
  padding: 0 12px 2px 0;
  border: 1px solid ${(props) => (props.$active ? "#ffbc69" : "transparent")};
  background: ${(props) => (props.$active ? "#ffe79f" : "none")};
  white-space: nowrap;

  &:disabled {
    color: #aaa;
  }
`;

const MenuIcon = styled.span`
  display: flex;
  justify-content: center;
  width: 36px;
  margin-right: 14px;
`;

const SubArrow = styled.svg`
  margin-left: auto;
`;

const MenuRule = styled.li`
  height: 1px;
  margin: 2px -2px 2px 51px;
  background: #bdbdbd;
`;

const SearchBox = styled.div`
  display: flex;
  align-items: center;
  width: 285px;
  height: 34px;
  margin-left: auto;
  padding: 0 9px 0 6px;
  border: 1px solid #d5d5d5;
  background: #fff;
`;

const SearchInput = styled.input`
  flex: 1;
  min-width: 0;
  padding: 0;
  border: 0;
  outline: 0;
  background: none;

  &::placeholder {
    color: #6d6d6d;
  }
`;

const ToolBar = styled.div`
  display: flex;
  align-items: center;
  height: 66px;
  padding-top: 2px;
`;

const Grip = styled.span`
  flex: none;
  ${(props) =>
    props.$vertical
      ? css`
          width: 64px;
          height: 4px;
          margin: ${props.$first ? "8px 0 4px" : "10px 0 6px"};
          background: repeating-linear-gradient(90deg, #bbb 0 3px, #fafafa 3px 4px, transparent 4px 6px);
        `
      : css`
          width: 4px;
          height: ${props.$short ? 22 : 46}px;
          margin: ${props.$first ? "0 2px 0 8px" : "0 3px 0 12px"};
          background: repeating-linear-gradient(#bbb 0 3px, #fafafa 3px 4px, transparent 4px 6px);
        `}
`;

const Divider = styled.span`
  flex: none;
  background: #bdbdbd;
  ${(props) =>
    props.$vertical
      ? css`
          width: 62px;
          height: 1px;
          margin: 4px 0 5px;
        `
      : css`
          width: 1px;
          height: 46px;
          max-height: 75%;
          margin: 0 4px;
        `}
`;

const ToolButton = styled.button`
  ${plainButton}
  flex: none;
  width: ${(props) => props.$cell}px;
  height: ${(props) => props.$cell}px;
  ${(props) =>
    props.$active &&
    css`
      border: 1px solid #ffbc69;
      background: linear-gradient(90deg, #ffe2ab, #ffc35e);
    `}
`;

const SplitTool = styled.div`
  display: flex;
  align-items: center;
`;

const DropButton = styled.button`
  ${plainButton}
  flex: none;
  width: 17px;
  height: 57px;
`;

const Workspace = styled.main`
  display: flex;
  flex: 1;
`;

const TreeDock = styled.section`
  display: flex;
  flex-direction: column;
  flex: 0 0 579px;
  border-right: 6px solid #e0e0e0;
`;

const MainDock = styled.section`
  display: flex;
  flex: 1;
  flex-direction: column;
  min-width: 0;
`;

const PanelBar = styled.div`
  display: flex;
  align-items: center;
  height: 29px;
  padding: 0 6px;
  background: ${(props) =>
    props.$focused ? "linear-gradient(#89a4bd, #95abc3)" : "linear-gradient(#a6bacb, #b4c7d7)"};
`;

const ControlGroup = styled.div`
  display: flex;
  gap: 8px;
  margin-left: auto;
`;

const BarButton = styled.button`
  ${plainButton}
  width: 20px;
  height: 24px;
`;

const PartPicker = styled.div`
  padding: 7px 6px;
`;

const PartSelect = styled.select`
  display: block;
  width: 100%;
  height: 33px;
  padding: 0 4px 2px;
  border: 1px solid #d5d5d5;
  border-radius: 0;
  background: #fff;
  appearance: none;
`;

const Tree = styled.div`
  flex: 1;
  border: 1px solid #828790;
  border-width: 1px 0 0 1px;
  background: #fff;
`;

const TreeRow = styled.div`
  display: flex;
  align-items: center;
  gap: ${(props) => props.$gap}px;
  height: 26px;
  padding-left: ${(props) => props.$indent}px;
  font-weight: ${(props) => (props.$bold ? 700 : 400)};

  span {
    margin-left: ${(props) => (props.$bold ? 11 : 2)}px;
  }
`;

const Expander = styled.button`
  width: 13px;
  height: 13px;
  padding: 0;
  border: 1px solid #919191;
  background: linear-gradient(#4b63a7, #4b63a7) center / 7px 1px no-repeat, #f3f3f3;
`;

const Branch = styled.i`
  width: 14px;
  height: 14px;
  margin-bottom: 12px;
  border: 1px dotted #808080;
  border-width: 0 0 1px 1px;
`;

const TabStrip = styled.div`
  display: flex;
  align-items: flex-start;
  height: 29px;
  border-top: 1px solid #c8c8c8;
`;

const Tab = styled.button`
  height: 27px;
  padding: 0 9px;
  border: 1px solid #c8c8c8;
  border-top: 0;
  background: #e1e1e1;
  ${(props) =>
    props.$active &&
    css`
      height: 28px;
      margin-top: -1px;
      border-left: 0;
      border-right: 0;
      background: #fff;
    `}
`;

const Scene = styled.div`
  position: relative;
  display: flex;
  flex: 1;
  align-items: center;
  justify-content: center;
  border-right: 2px solid #c8c8c8;
  border-left: 1px solid #c8c8c8;
  background: linear-gradient(#fff, #dbdbdb);
`;

const CornerAxes = styled.div`
  position: absolute;
  bottom: 39px;
  left: 26px;
`;

const Splitter = styled.div`
  height: 6px;
  background: #e0e0e0;
`;

const MacroMenuBar = styled.nav`
  display: flex;
  align-items: center;
  height: 38px;
`;

const MacroToolBar = styled.div`
  display: flex;
  align-items: center;
  height: 48px;
`;

const ScriptArea = styled.div`
  height: 39px;
  border: 1px solid #696969;
  border-bottom-color: #ababab;
  background: #ababab;
`;

const ZoomRow = styled.div`
  display: flex;
  align-items: center;
  justify-content: flex-end;
  height: 30px;
  margin-top: 3px;
  padding: 1px 1px 0 0;
  border-top: 2px solid #c8c8c8;

  label {
    margin-right: 7px;
  }
`;

const RoundButton = styled.button`
  ${plainButton}
  width: 22px;
  height: 22px;
  border: 1px solid #555;
  border-radius: 50%;
  background: #fff;
`;

const ZoomSlider = styled.input`
  width: 178px;
  height: 22px;
  margin: 0;
  appearance: none;
  background: linear-gradient(#b0b0b0, #b0b0b0) center / 100% 1px no-repeat;

  &::-webkit-slider-thumb {
    appearance: none;
    width: 14px;
    height: 20px;
    border: 1px solid #8a8a8a;
    background: #f7f7f7;
    clip-path: polygon(0 0, 100% 0, 100% 70%, 50% 100%, 0 70%);
  }
`;

const SideBar = styled.aside`
  display: flex;
  flex-direction: column;
  align-items: center;
  width: 80px;
`;

const BottomBar = styled.footer`
  display: flex;
  align-items: center;
  height: 57px;
  padding-top: 6px;
`;

const BottomGroup = styled.div`
  display: flex;
  align-items: center;

  &:first-child {
    width: 351px;
  }
`;

const Watermark = styled.span`
  margin-left: auto;
  padding: 12px 14px 0 0;
  color: #9b9b9b;
  font-size: 19px;
`;
